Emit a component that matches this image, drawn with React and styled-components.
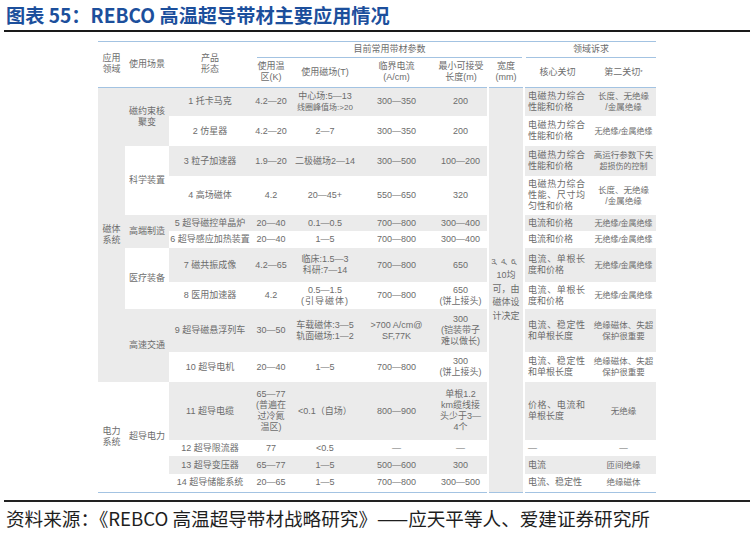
import React from 'react';
import styled, { createGlobalStyle } from 'styled-components';

const FONT = `"Liberation Sans", "Noto Sans CJK SC", sans-serif`;
const CJK = `"Noto Sans CJK SC", "Liberation Sans", sans-serif`;
const BLUE = '#a3c3e2';
const GREY = '#ebebeb';

const GlobalStyle = createGlobalStyle`
  html, body { margin: 0; padding: 0; background: #fff; }
  body { font-family: ${FONT}; }
`;

const Page = styled.div`
  width: 754px;
  height: 533px;
  display: flex;
  flex-direction: column;
  overflow: hidden;
`;

const Title = styled.h1`
  margin: 0 4px;
  height: 32px;
  box-sizing: border-box;
  padding: 5px 0 0 2px;
  font-family: ${CJK};
  font-size: 19.2px;
  line-height: 20px;
  font-weight: 700;
  color: #1c4f9c;
  border-bottom: 2px solid #1a1a1a;
`;

const Table = styled.table`
  margin: 9px auto 0;
  width: 558px;
  table-layout: fixed;
  border-collapse: collapse;
  border-top: 1.5px solid ${BLUE};
  border-bottom: 1.5px solid ${BLUE};
  font-family: ${FONT};
  font-size: 9px;
  line-height: 11px;
  color: #6c6c6c;
`;

const Head = styled.thead`
  border-bottom: 1.5px solid ${BLUE};
`;

const Tr = styled.tr`
  height: ${(p) => p.$h}px;
`;

const Th = styled.th`
  padding: 0;
  font-weight: 400;
  text-align: center;
  vertical-align: middle;
  white-space: nowrap;
`;

const GroupTh = styled.th`
  padding: 0;
  font-weight: 400;
  vertical-align: bottom;
`;

const GroupLabel = styled.div`
  margin: 0 ${(p) => p.$mr}px 0 ${(p) => p.$ml}px;
  height: 15px;
  line-height: 15px;
  text-align: center;
  border-bottom: 1.5px solid ${BLUE};
`;

const Td = styled.td`
  padding: ${(p) => (p.$left ? '0 6px 0 3px' : '0')};
  background: ${(p) => (p.$g ? GREY : '#fff')};
  text-align: ${(p) => (p.$left ? 'left' : 'center')};
  vertical-align: middle;
  white-space: nowrap;
  font-size: ${(p) => p.$fs || 9}px;
  line-height: ${(p) => p.$lh || 11}px;
  ${(p) => p.$sep && `border-left: 2px solid #fff; border-right: 2px solid #fff;`}
`;

const Line = styled.span`
  display: block;
  ${(p) => p.$fs && `font-size: ${p.$fs}px;`}
  ${(p) => p.$ls && `letter-spacing: ${p.$ls}px;`}
  ${(p) => p.$j && `text-align: justify; text-align-last: justify;`}
`;

const Sup = styled.span`
  font-size: 6px;
  vertical-align: top;
`;

const Source = styled.footer`
  margin: 7px 4px 0;
  border-top: 2px solid #222;
  padding: 4px 0 0 2px;
  font-family: ${CJK};
  font-size: 18.6px;
  line-height: 23px;
  color: #1e1e1e;
`;

const Lines = ({ v }) => {
  const arr = Array.isArray(v) ? v : [v];
  return arr.map((l, i) => {
    const o = typeof l === 'string' ? { t: l } : l;
    return (
      <Line key={i} $fs={o.fs} $j={o.j} $ls={o.ls}>
        {o.t}
      </Line>
    );
  });
};

const COLS = [27, 44, 82, 40, 68, 75, 54, 36, 67, 65];

const heat = [{ t: '电磁热力综合', j: true }, '性能和价格'];
const lenIns = ['长度、无绝缘', '/金属绝缘'];
const noIns = { t: '无绝缘/金属绝缘', fs: 8 };
const single = [{ t: '电流、单根长', j: true }, '度和价格'];
const stab = [{ t: '电流、稳定性', j: true }, '和单根长度'];
const quench = ['绝缘磁体、失超', '保护很重要'];

const rows = [
  {
    h: 29, g: true,
    lead: [
      { v: ['磁体', '系统'], span: 10, g: true },
      { v: ['磁约束核', '聚变'], span: 2, g: true },
    ],
    c: ['1 托卡马克', '4.2—20', ['中心场:5—13', { t: '线圈峰值场:>20', fs: 8 }], '300—350', '200'],
    width: true,
    core: heat, second: lenIns,
  },
  { h: 30, g: false, c: ['2 仿星器', '4.2—20', '2—7', '300—350', '200'], core: heat, second: noIns },
  {
    h: 30, g: true,
    lead: [{ v: '科学装置', span: 2, g: false }],
    c: ['3 粒子加速器', '1.9—20', '二极磁场2—14', '300—500', '100—200'],
    core: heat, second: ['高运行参数下失', { t: '超损伤的控制', fs: 8 }],
  },
  {
    h: 39, g: false,
    c: ['4 高场磁体', '4.2', '20—45+', '550—650', '320'],
    core: [{ t: '电磁热力综合', j: true }, { t: '性能、尺寸均', j: true }, '匀性和价格'],
    second: lenIns,
  },
  {
    h: 16, g: true,
    lead: [{ v: '高端制造', span: 2, g: true }],
    c: ['5 超导磁控单晶炉', '20—40', '0.1—0.5', '700—800', '300—400'],
    core: '电流和价格', second: noIns,
  },
  { h: 17, g: false, c: ['6 超导感应加热装置', '20—40', '1—5', '700—800', '300—400'], core: '电流和价格', second: noIns },
  {
    h: 34, g: true,
    lead: [{ v: '医疗装备', span: 2, g: false }],
    c: ['7 磁共振成像', '4.2—65', ['临床:1.5—3', '科研:7—14'], '700—800', '650'],
    core: single, second: noIns,
  },
  {
    h: 27, g: false,
    c: ['8 医用加速器', '4.2', ['0.5—1.5', { t: '(引导磁体)', ls: 1 }], '700—800', ['650', '(饼上接头)']],
    core: single, second: noIns,
  },
  {
    h: 43, g: true,
    lead: [{ v: '高速交通', span: 2, g: true }],
    c: ['9 超导磁悬浮列车', '30—50', ['车载磁体:3—5', '轨面磁场:1—2'], ['>700 A/cm@', 'SF,77K'], ['300', '(铠装带子', '难以做长)']],
    core: stab, second: quench,
  },
  { h: 30, g: false, c: ['10 超导电机', '20—40', '1—5', '700—800', ['300', '(饼上接头)']], core: stab, second: quench },
  {
    h: 58, g: true,
    lead: [
      { v: ['电力', '系统'], span: 4, g: false },
      { v: '超导电力', span: 4, g: false },
    ],
    c: ['11 超导电缆', ['65—77', '(普遍在', '过冷氮', '温区)'], '<0.1（自场）', '800—900', ['单根1.2', 'km缆线接', '头少于3—', '4个']],
    core: [{ t: '价格、电流和', j: true }, '单根长度'], second: '无绝缘',
  },
  { h: 16, g: false, c: ['12 超导限流器', '77', '<0.5', '—', '—'], core: '—', second: '—' },
  { h: 18, g: true, c: ['13 超导变压器', '65—77', '1—5', '500—600', '300'], core: '电流', second: '匝间绝缘' },
  { h: 18, g: false, c: ['14 超导储能系统', '20—65', '1—5', '700—800', '300—500'], core: '电流、稳定性', second: '绝缘磁体' },
];

const WIDTH_TEXT = [{ t: '3、4、6、', fs: 8, ls: -1.3 }, '10均', '可，由', '磁体设', '计决定'];

export default function App() {
  return (
    <Page>
      <GlobalStyle />
      <Title>图表 55：REBCO 高温超导带材主要应用情况</Title>
      <Table>
        <colgroup>
          {COLS.map((w, i) => (
            <col key={i} style={{ width: w }} />
          ))}
        </colgroup>
        <Head>
          <Tr $h={16}>
            <Th rowSpan={2}>
              <Lines v={['应用', '领域']} />
            </Th>
            <Th rowSpan={2}>使用场景</Th>
            <Th rowSpan={2}>
              <Lines v={['产品', '形态']} />
            </Th>
            <GroupTh colSpan={5}>
              <GroupLabel $ml={6} $mr={2}>目前常用带材参数</GroupLabel>
            </GroupTh>
            <GroupTh colSpan={2}>
              <GroupLabel $ml={2} $mr={0}>领域诉求</GroupLabel>
            </GroupTh>
          </Tr>
          <Tr $h={29}>
            <Th>
              <Lines v={['使用温', '区(K)']} />
            </Th>
            <Th>使用磁场(T)</Th>
            <Th>
              <Lines v={['临界电流', '(A/cm)']} />
            </Th>
            <Th>
              <Lines v={['最小可接受', '长度(m)']} />
            </Th>
            <Th>
              <Lines v={['宽度', '(mm)']} />
            </Th>
            <Th>核心关切</Th>
            <Th>
              第二关切<Sup>*</Sup>
            </Th>
          </Tr>
        </Head>
        <tbody>
          {rows.map((r, i) => (
            <Tr key={i} $h={r.h}>
              {(r.lead || []).map((l, j) => (
                <Td key={`l${j}`} rowSpan={l.span} $g={l.g}>
                  <Lines v={l.v} />
                </Td>
              ))}
              {r.c.map((v, j) => (
                <Td key={`c${j}`} $g={r.g}>
                  <Lines v={v} />
                </Td>
              ))}
              {r.width && (
                <Td rowSpan={14} $g $sep $lh={13.7}>
                  <Lines v={WIDTH_TEXT} />
                </Td>
              )}
              <Td $g={r.g} $left>
                <Lines v={r.core} />
              </Td>
              <Td $g={r.g} $fs={8.5}>
                <Lines v={r.second} />
              </Td>
            </Tr>
          ))}
        </tbody>
      </Table>
      <Source>资料来源：《REBCO 高温超导带材战略研究》——应天平等人、爱建证券研究所</Source>
    </Page>
  );
}
